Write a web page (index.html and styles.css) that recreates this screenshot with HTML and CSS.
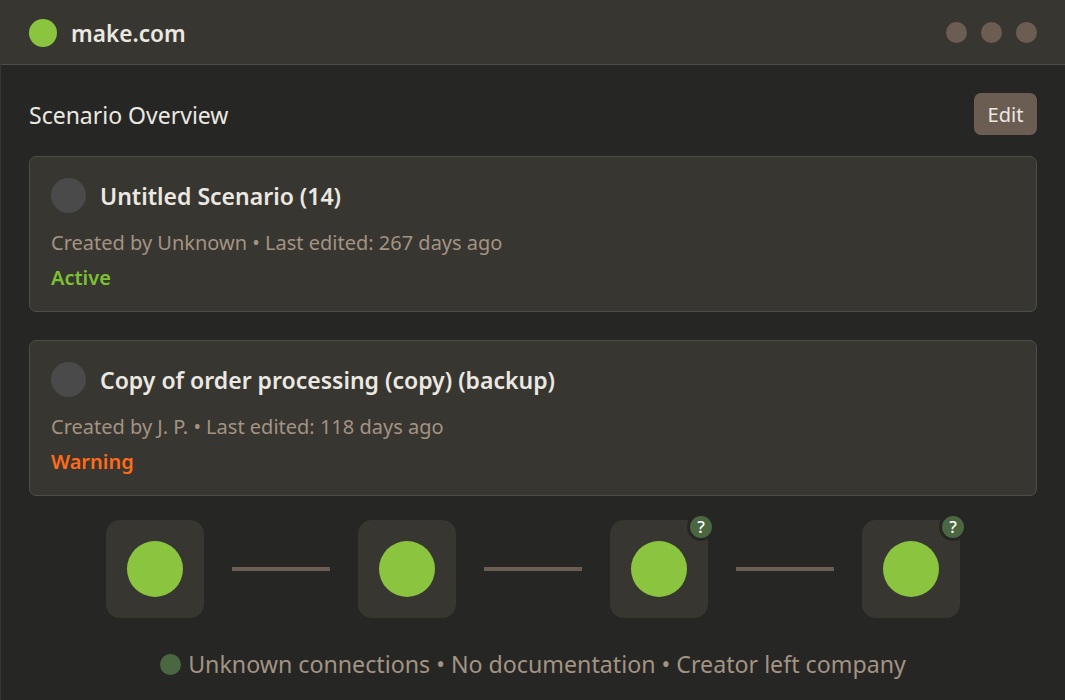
FILE: index.html
```html
<!DOCTYPE html>
<html lang="en">

<head>
	<meta charset="UTF-8">
	<meta name="viewport" content="width=device-width, initial-scale=1.0">
	<title>make.com</title>
	<link rel="stylesheet" href="styles.css">
</head>

<body>
	<header class="topbar">
		<div class="brand">
			<span class="logo"></span>
			<span class="brand-name">make.com</span>
		</div>
		<div class="window-dots">
			<span class="window-dot"></span>
			<span class="window-dot"></span>
			<span class="window-dot"></span>
		</div>
	</header>
	<main class="content">
		<div class="page-head">
			<h1 class="page-title">Scenario Overview</h1>
			<button type="button" class="edit-btn">Edit</button>
		</div>
		<section class="card">
			<div class="card-head">
				<span class="avatar"></span>
				<h2 class="card-title">Untitled Scenario (14)</h2>
			</div>
			<p class="card-meta">Created by Unknown • Last edited: 267 days ago</p>
			<p class="status status-active">Active</p>
		</section>
		<section class="card">
			<div class="card-head">
				<span class="avatar"></span>
				<h2 class="card-title">Copy of order processing (copy) (backup)</h2>
			</div>
			<p class="card-meta">Created by J. P. • Last edited: 118 days ago</p>
			<p class="status status-warning">Warning</p>
		</section>
		<div class="flow">
			<div class="node"><span class="node-dot"></span></div>
			<div class="connector"></div>
			<div class="node"><span class="node-dot"></span></div>
			<div class="connector"></div>
			<div class="node"><span class="node-dot"></span><span class="badge">?</span></div>
			<div class="connector"></div>
			<div class="node"><span class="node-dot"></span><span class="badge">?</span></div>
		</div>
		<div class="footnote">
			<span class="footnote-dot"></span>
			<span>Unknown connections • No documentation • Creator left company</span>
		</div>
	</main>
</body>

</html>
```

FILE: styles.css
```css
html {
	font-size: 16px;
}

body {
	margin: 0;
	height: 700px;
	box-sizing: border-box;
	overflow: hidden;
	background: #262624;
	color: #ebe8e2;
	font-family: "Noto Sans", "Open Sans", sans-serif;
	border-left: 1px solid #383630;
	border-top: 1px solid #383630;
}

.topbar {
	display: flex;
	justify-content: space-between;
	align-items: center;
	height: 63px;
	padding: 0 28px;
	background: #383630;
	border-bottom: 1px solid #4d4c47;
}

.brand {
	display: flex;
	align-items: center;
	gap: 14px;
}

.logo {
	width: 28px;
	height: 28px;
	border-radius: 50%;
	background: #8bc53f;
}

.brand-name {
	padding-top: 2px;
	font-size: 22.6px;
	font-weight: 600;
}

.window-dots {
	display: flex;
	gap: 14px;
}

.window-dot {
	width: 21px;
	height: 21px;
	border-radius: 50%;
	background: #6b5d52;
}

.content {
	padding: 28px 28px 0;
}

.page-head {
	display: flex;
	justify-content: space-between;
	align-items: center;
	height: 42px;
	margin-bottom: 21px;
}

.page-title {
	margin: 0;
	padding-top: 2px;
	font-size: 23px;
	font-weight: 400;
}

.edit-btn {
	width: 63px;
	height: 42px;
	border: 0;
	border-radius: 7px;
	background: #6b5d52;
	color: #ebe8e2;
	font: inherit;
	font-size: 20px;
}

.card {
	height: 156px;
	box-sizing: border-box;
	padding: 21px;
	margin-bottom: 28px;
	background: #383630;
	border: 1px solid #4d4c47;
	border-radius: 7px;
}

.card-head {
	display: flex;
	align-items: center;
	gap: 14px;
	height: 35px;
}

.avatar {
	width: 35px;
	height: 35px;
	border-radius: 50%;
	background: #4a4a4a;
}

.card-title {
	margin: 0;
	padding-top: 2px;
	font-size: 23px;
	font-weight: 600;
	line-height: 33px;
}

.card-meta {
	margin: 17px 0 0;
	font-size: 20px;
	line-height: 26px;
	color: #a39383;
}

.status {
	margin: 9px 0 0;
	font-size: 20px;
	font-weight: 600;
	line-height: 26px;
}

.status-active {
	color: #7cc233;
}

.status-warning {
	color: #ff6b1a;
}

.flow {
	display: flex;
	justify-content: center;
	align-items: center;
	gap: 28px;
	margin-top: -4px;
}

.node {
	position: relative;
	display: flex;
	justify-content: center;
	align-items: center;
	width: 98px;
	height: 98px;
	border-radius: 14px;
	background: #383630;
}

.node-dot {
	width: 56px;
	height: 56px;
	border-radius: 50%;
	background: #8bc53f;
}

.connector {
	width: 98px;
	height: 4px;
	background: #6b5d52;
}

.badge {
	position: absolute;
	top: -7px;
	right: -7px;
	width: 22px;
	height: 22px;
	border: 3px solid #262624;
	border-radius: 50%;
	background: #4a6741;
	color: #fff;
	font-size: 17px;
	font-weight: 500;
	line-height: 22px;
	text-align: center;
}

.footnote {
	display: flex;
	justify-content: center;
	align-items: center;
	gap: 7px;
	margin-top: 28px;
	font-size: 23.2px;
	line-height: 36px;
	color: #a39383;
}

.footnote-dot {
	width: 21px;
	height: 21px;
	border-radius: 50%;
	background: #4a6741;
}
```
